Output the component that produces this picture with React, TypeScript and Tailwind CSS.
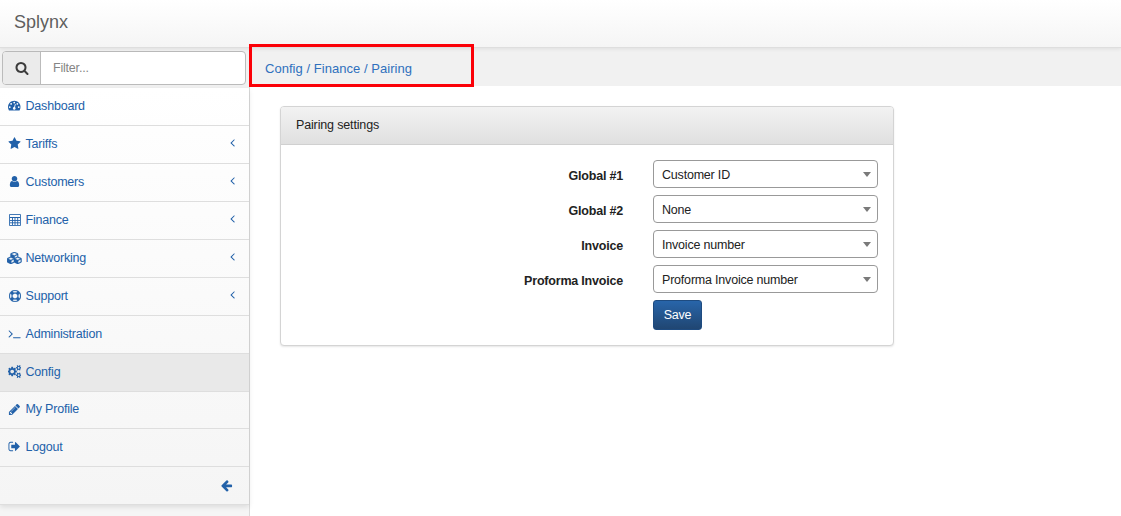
import React from "react";

const icons = {
  search:
    "M1216 832q0-185-131.5-316.5t-316.5-131.5-316.5 131.5-131.5 316.5 131.5 316.5 316.5 131.5 316.5-131.5 131.5-316.5zm512 832q0 52-38 90t-90 38q-54 0-90-38l-343-342q-179 124-399 124-143 0-273.5-55.5t-225-150-150-225-55.5-273.5 55.5-273.5 150-225 225-150 273.5-55.5 273.5 55.5 225 150 150 225 55.5 273.5q0 220-124 399l343 343q37 37 37 90z",
  dashboard:
    "M384 1152q0-53-37.5-90.5t-90.5-37.5-90.5 37.5-37.5 90.5 37.5 90.5 90.5 37.5 90.5-37.5 37.5-90.5zm192-448q0-53-37.5-90.5t-90.5-37.5-90.5 37.5-37.5 90.5 37.5 90.5 90.5 37.5 90.5-37.5 37.5-90.5zm428 481l101-382q6-26-7.5-48.5t-38.5-29.5-48 6.5-30 39.5l-101 382q-60 5-107 43.5t-63 98.5q-20 77 20 146t117 89 146-20 89-117q16-60-6-117t-72-91zm660-33q0-53-37.5-90.5t-90.5-37.5-90.5 37.5-37.5 90.5 37.5 90.5 90.5 37.5 90.5-37.5 37.5-90.5zm-640-640q0-53-37.5-90.5t-90.5-37.5-90.5 37.5-37.5 90.5 37.5 90.5 90.5 37.5 90.5-37.5 37.5-90.5zm448 192q0-53-37.5-90.5t-90.5-37.5-90.5 37.5-37.5 90.5 37.5 90.5 90.5 37.5 90.5-37.5 37.5-90.5zm320 448q0 261-141 483-19 29-54 29h-1402q-35 0-54-29-141-221-141-483 0-182 71-348t191-286 286-191 348-71 348 71 286 191 191 286 71 348z",
  star: "M1728 647q0 22-26 48l-363 354 86 500q1 7 1 20 0 21-10.5 35.5t-30.5 14.5q-19 0-40-12l-449-236-449 236q-22 12-40 12-21 0-31.5-14.5t-10.5-35.5q0-6 2-20l86-500-364-354q-25-27-25-48 0-37 56-46l502-73 225-455q19-41 49-41t49 41l225 455 502 73q56 9 56 46z",
  user: "M1536 1399q0 109-62.5 187t-150.5 78h-854q-88 0-150.5-78t-62.5-187q0-85 8.5-160.5t31.5-152 58.5-131 94-89 134.5-34.5q131 128 313 128t313-128q76 0 134.5 34.5t94 89 58.5 131 31.5 152 8.5 160.5zm-256-887q0 159-112.5 271.5t-271.5 112.5-271.5-112.5-112.5-271.5 112.5-271.5 271.5-112.5 271.5 112.5 112.5 271.5z",
  cubes:
    "M640 1632l384-192v-314l-384 164v342zm-64-454l404-173-404-173-404 173zm1088 454l384-192v-314l-384 164v342zm-64-454l404-173-404-173-404 173zm-448-293l384-165v-266l-384 164v267zm-64-379l441-189-441-189-441 189zm1088 518v416q0 36-19 67t-52 47l-448 224q-25 14-57 14t-57-14l-448-224q-4-2-7-4-2 2-7 4l-448 224q-25 14-57 14t-57-14l-448-224q-33-16-52-47t-19-67v-416q0-38 21.5-70t56.5-48l434-186v-400q0-38 21.5-70t56.5-48l448-192q23-10 50-10t50 10l448 192q35 16 56.5 48t21.5 70v400l434 186q36 16 57 48t21 70z",
  ring: "M896 0q182 0 348 71t286 191 191 286 71 348-71 348-191 286-286 191-348 71-348-71-286-191-191-286-71-348 71-348 191-286 286-191 348-71zm0 128q-190 0-361 90l194 194q82-28 167-28t167 28l194-194q-171-90-361-90zm-678 1129l194-194q-28-82-28-167t28-167l-194-194q-90 171-90 361t90 361zm678 407q190 0 361-90l-194-194q-82 28-167 28t-167-28l-194 194q171 90 361 90zm0-384q159 0 271.5-112.5t112.5-271.5-112.5-271.5-271.5-112.5-271.5 112.5-112.5 271.5 112.5 271.5 271.5 112.5zm484-217l194 194q90-171 90-361t-90-361l-194 194q28 82 28 167t-28 167z",
  terminal:
    "M649 983l-466 466q-10 10-23 10t-23-10l-50-50q-10-10-10-23t10-23l393-393-393-393q-10-10-10-23t10-23l50-50q10-10 23-10t23 10l466 466q10 10 10 23t-10 23zm1079 457v64q0 14-9 23t-23 9h-960q-14 0-23-9t-9-23v-64q0-14 9-23t23-9h960q14 0 23 9t9 23z",
  cogs: "M832 896q0-106-75-181t-181-75-181 75-75 181 75 181 181 75 181-75 75-181zm768 512q0-52-38-90t-90-38-90 38-38 90q0 53 37.5 90.5t90.5 37.5 90.5-37.5 37.5-90.5zm0-1024q0-52-38-90t-90-38-90 38-38 90q0 53 37.5 90.5t90.5 37.5 90.5-37.5 37.5-90.5zm-384 421v185q0 10-7 19.5t-16 10.5l-155 24q-11 35-32 76 34 48 90 115 7 11 7 20 0 12-7 19-23 30-82.5 89.5t-78.5 59.5q-11 0-21-7l-115-90q-37 19-77 31-11 108-23 155-7 24-30 24h-186q-11 0-20-7.5t-10-17.5l-23-153q-34-10-75-31l-118 89q-7 7-20 7-11 0-21-8-144-133-144-160 0-9 7-19 10-14 41-53t47-61q-23-44-35-82l-152-24q-10-1-17-9.5t-7-19.5v-185q0-10 7-19.5t16-10.5l155-24q11-35 32-76-34-48-90-115-7-11-7-20 0-12 7-20 22-30 82-89t79-59q11 0 21 7l115 90q34-18 77-32 11-108 23-154 7-24 30-24h186q11 0 20 7.5t10 17.5l23 153q34 10 75 31l118-89q8-7 20-7 11 0 21 8 144 133 144 160 0 8-7 19-12 16-42 54t-45 60q23 48 34 82l152 23q10 2 17 10.5t7 19.5zm640 533v140q0 16-149 31-12 27-30 52 51 113 51 138 0 4-4 7-122 71-124 71-8 0-46-47t-52-68q-20 2-30 2t-30-2q-14 21-52 68t-46 47q-2 0-124-71-4-3-4-7 0-25 51-138-18-25-30-52-149-15-149-31v-140q0-16 149-31 13-29 30-52-51-113-51-138 0-4 4-7 4-2 35-20t59-34 30-16q8 0 46 46.5t52 67.5q20-2 30-2t30 2q51-71 92-112l6-2q4 0 124 70 4 3 4 7 0 25-51 138 17 23 30 52 149 15 149 31zm0-1024v140q0 16-149 31-12 27-30 52 51 113 51 138 0 4-4 7-122 71-124 71-8 0-46-47t-52-68q-20 2-30 2t-30-2q-14 21-52 68t-46 47q-2 0-124-71-4-3-4-7 0-25 51-138-18-25-30-52-149-15-149-31v-140q0-16 149-31 13-29 30-52-51-113-51-138 0-4 4-7 4-2 35-20t59-34 30-16q8 0 46 46.5t52 67.5q20-2 30-2t30 2q51-71 92-112l6-2q4 0 124 70 4 3 4 7 0 25-51 138 17 23 30 52 149 15 149 31z",
  pencil:
    "M491 1536l91-91-235-235-91 91v107h128v128h107zm523-928q0-22-22-22-10 0-17 7l-542 542q-7 7-7 17 0 22 22 22 10 0 17-7l542-542q7-7 7-17zm-54-192l416 416-832 832h-416v-416zm683 96q0 53-37 90l-166 166-416-416 166-165q36-38 90-38 53 0 91 38l235 234q37 39 37 91z",
  signOut:
    "M704 1440q0 4 1 20t.5 26.5-3 23.5-10 19.5-20.5 6.5h-320q-119 0-203.5-84.5t-84.5-203.5v-704q0-119 84.5-203.5t203.5-84.5h320q13 0 22.5 9.5t9.5 22.5q0 4 1 20t.5 26.5-3 23.5-10 19.5-20.5 6.5h-320q-66 0-113 47t-47 113v704q0 66 47 113t113 47h312l11.5 1 11.5 3 8 5.5 7 9 2 13.5zm928-544q0 26-19 45l-544 544q-19 19-45 19t-45-19-19-45v-288h-448q-26 0-45-19t-19-45v-384q0-26 19-45t45-19h448v-288q0-26 19-45t45-19 45 19l544 544q19 19 19 45z",
  arrowLeft:
    "M1664 896v128q0 53-32.5 90.5t-84.5 37.5h-704l293 294q38 36 38 90t-38 90l-75 76q-37 37-90 37-52 0-91-37l-651-652q-37-37-37-90 0-52 37-91l651-650q38-38 91-38 52 0 90 38l75 74q38 38 38 91t-38 91l-293 293h704q52 0 84.5 37.5t32.5 90.5z",
  angleLeft:
    "M1203 544q0 13-10 23l-393 393 393 393q10 10 10 23t-10 23l-50 50q-10 10-23 10t-23-10l-466-466q-10-10-10-23t10-23l466-466q10-10 23-10t23 10l50 50q10 10 10 23z",
};

type IconName = keyof typeof icons;

function Icon({ name, className }: { name: IconName; className?: string }) {
  return (
    <svg
      viewBox={name === "cubes" ? "0 0 2304 1792" : "0 0 1792 1792"}
      fill="currentColor"
      stroke="currentColor"
      strokeWidth={name === "cubes" || name === "ring" ? 45 : 0}
      className={className}
      aria-hidden="true"
    >
      <path d={icons[name]} />
    </svg>
  );
}

function CalculatorIcon() {
  return (
    <svg viewBox="0 0 12 12" className="h-3 w-3" fill="none" stroke="currentColor" aria-hidden="true">
      <path d="M.5.5h11v11H.5z" strokeWidth="1" strokeOpacity=".85" />
      <path d="M1 3.5h10" strokeWidth="1" />
      <path d="M1 6.5h10M1 8.8h10M3.5 4v7M6 4v7M8.7 4v7" strokeWidth=".9" />
    </svg>
  );
}

interface NavItem {
  label: string;
  icon: IconName | "calculator";
  iconClass?: string;
  expandable?: boolean;
  active?: boolean;
  rowClass?: string;
}

const navItems: NavItem[] = [
  { label: "Dashboard", icon: "dashboard", iconClass: "h-[12.5px] w-[12.5px]" },
  { label: "Tariffs", icon: "star", expandable: true },
  { label: "Customers", icon: "user", expandable: true },
  { label: "Finance", icon: "calculator", expandable: true },
  { label: "Networking", icon: "cubes", iconClass: "h-3 w-[15.5px]", expandable: true },
  { label: "Support", icon: "ring", iconClass: "h-3 w-3", expandable: true },
  { label: "Administration", icon: "terminal" },
  { label: "Config", icon: "cogs", active: true },
  { label: "My Profile", icon: "pencil", rowClass: "h-[37px]" },
  { label: "Logout", icon: "signOut" },
];

function NavRow({ item }: { item: NavItem }) {
  return (
    <li
      className={`flex items-center border-b border-[#dedede] pl-[6px] ${item.rowClass ?? "h-[38px]"} ${
        item.active ? "bg-[#e9e9e9]" : ""
      }`}
    >
      <span className="flex w-[17px] justify-center pb-[2px]">
        {item.icon === "calculator" ? (
          <CalculatorIcon />
        ) : (
          <Icon name={item.icon} className={item.iconClass ?? "h-[13px] w-[13px]"} />
        )}
      </span>
      <a className="ml-[2.5px] pb-[2px] leading-4">{item.label}</a>
      {item.expandable && <Icon name="angleLeft" className="mr-[10.5px] mb-[5px] ml-auto h-[13px] w-[13px]" />}
    </li>
  );
}

const fields = [
  { label: "Global #1", value: "Customer ID" },
  { label: "Global #2", value: "None" },
  { label: "Invoice", value: "Invoice number" },
  { label: "Proforma Invoice", value: "Proforma Invoice number" },
];

export default function App() {
  return (
    <div className="flex h-[516px] w-[1121px] flex-col overflow-hidden bg-white font-['Liberation_Sans',Arial,sans-serif] text-[12.5px] tracking-[-0.2px] text-[#222]">
      <header className="z-10 flex h-12 shrink-0 items-center border-b border-[#dedede] bg-linear-to-b from-white to-[#f5f5f5] pb-[3px] pl-[14px] text-[18px] tracking-normal text-[#5e5e5e] shadow-[0_1px_4px_rgba(0,0,0,0.08)]">
        Splynx
      </header>
      <div className="flex min-h-0 flex-1">
        <aside className="flex w-[250px] shrink-0 flex-col border-r border-[#dadada] bg-[#f5f5f5]">
          <div className="h-10 bg-[#f1f1f1] pt-[3px] pl-[2px]">
            <div className="flex h-[34px] w-[244px] overflow-hidden rounded-[4px] border border-[#bbb] bg-white">
              <div className="flex w-[38px] items-center justify-center border-r border-[#bbb] bg-[#ebebeb] text-[#3c3c3c]">
                <Icon name="search" className="h-[14px] w-[14px]" />
              </div>
              <input
                placeholder="Filter..."
                className="min-w-0 flex-1 bg-transparent pl-3 tracking-[-0.2px] outline-none placeholder:text-[#858585]"
              />
            </div>
          </div>
          <nav className="bg-linear-to-b from-white to-[#f5f5f5] text-[#2261a9] shadow-[0_2px_5px_rgba(0,0,0,0.1)]">
            <ul>
              {navItems.map((item) => (
                <NavRow key={item.label} item={item} />
              ))}
            </ul>
            <div className="flex h-[38px] items-center justify-end border-b border-[#dedede] pr-4 pb-px">
              <Icon name="arrowLeft" className="h-[13px] w-[13px]" />
            </div>
          </nav>
        </aside>
        <main className="min-w-0 flex-1">
          <div className="relative flex h-[38px] items-center bg-[#f1f1f1] pt-[3px] pl-[15px] text-[13px] tracking-[0.04px] text-[#2f70bd]">
            Config / Finance / Pairing
            <div className="absolute -top-[4px] -left-px z-20 h-[43px] w-[225px] border-[3px] border-[#fb0007]" />
          </div>
          <section className="mt-5 ml-[30px] h-[240px] w-[614px] rounded-[4px] border border-[#d4d4d4] bg-white shadow-[0_1px_2px_rgba(0,0,0,0.1)]">
            <h2 className="flex h-[38px] items-center rounded-t-[3px] border-b border-[#d0d0d0] bg-linear-to-b from-[#f2f2f2] to-[#e0e0e0] pb-px pl-[15px] tracking-[-0.15px]">
              Pairing settings
            </h2>
            <div className="flex flex-col gap-[7px] pt-[15px]">
              {fields.map((field) => (
                <div key={field.label} className="flex h-7 items-center">
                  <label className="w-[342px] pt-1 text-right font-bold">{field.label}</label>
                  <div className="ml-[30px] flex h-7 w-[225px] items-center justify-between rounded-[4px] border border-[#999] bg-white pr-[6px] pl-2">
                    <span className="pt-[2px]">{field.value}</span>
                    <svg viewBox="0 0 8 5" className="h-[5px] w-2" aria-hidden="true">
                      <path d="M0 0h8L4 5z" fill="#7a7a7a" />
                    </svg>
                  </div>
                </div>
              ))}
              <button className="ml-[372px] h-[30px] w-[49px] rounded-[3px] border border-[#1e4b80] bg-linear-to-b from-[#2865aa] to-[#204672] text-white">
                Save
              </button>
            </div>
          </section>
        </main>
      </div>
    </div>
  );
}
